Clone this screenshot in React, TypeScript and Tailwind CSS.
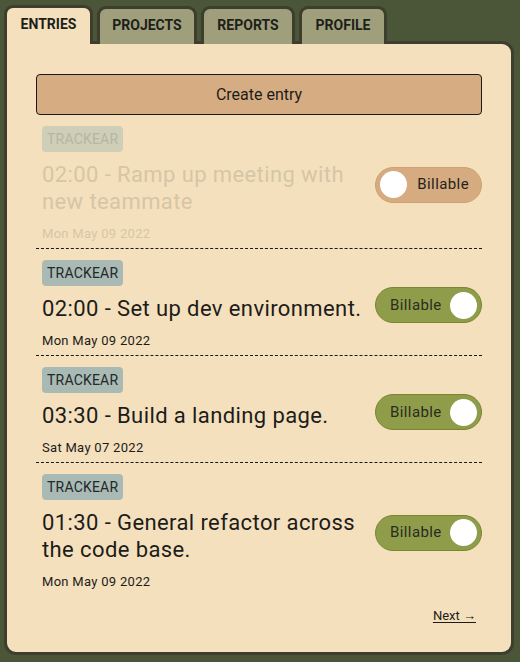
import React from "react";

type Entry = {
  time: string;
  title: string;
  date: string;
  billable: boolean;
  faded?: boolean;
};

const entries: Entry[] = [
  { time: "02:00", title: "Ramp up meeting with new teammate", date: "Mon May 09 2022", billable: false, faded: true },
  { time: "02:00", title: "Set up dev environment.", date: "Mon May 09 2022", billable: true },
  { time: "03:30", title: "Build a landing page.", date: "Sat May 07 2022", billable: true },
  { time: "01:30", title: "General refactor across the code base.", date: "Mon May 09 2022", billable: true },
];

function Toggle({ on }: { on: boolean }) {
  if (on) {
    return (
      <div className="flex h-[36px] w-[107px] shrink-0 items-center justify-between rounded-full border border-[#77872f] bg-[#8f9d4a] pl-[14px] pr-[4px]">
        <span className="text-[15px] tracking-[0.4px] text-[#2b2b22]">Billable</span>
        <span className="h-[27px] w-[27px] rounded-full bg-white" />
      </div>
    );
  }
  return (
    <div className="flex h-[36px] w-[107px] shrink-0 items-center justify-between rounded-full border border-[#cea173] bg-[#d6ab80] pl-[4px] pr-[12px]">
      <span className="h-[27px] w-[27px] rounded-full bg-white" />
      <span className="text-[15px] tracking-[0.4px] text-[#1f241f]">Billable</span>
    </div>
  );
}

function EntryRow({ e, last }: { e: Entry; last: boolean }) {
  return (
    <div
      className={
        last
          ? "flex items-center justify-between pt-[11px] pb-[5px]"
          : "flex items-center justify-between border-b border-dashed border-[#1a1a1a] pt-[11px] pb-[5px]"
      }
    >
      <div className="flex flex-col items-start pl-[6px] pr-[12px]">
        <span
          className={
            e.faded
              ? "flex h-[26px] items-center rounded-[4px] bg-[#cfcfb8] px-[5px] text-[14px] tracking-[0.2px] text-[#b3b7a1]"
              : "flex h-[26px] items-center rounded-[4px] bg-[#a9bab4] px-[5px] text-[14px] tracking-[0.2px] text-[#23282a]"
          }
        >
          TRACKEAR
        </span>
        <div
          className={
            e.faded
              ? "mt-[9px] text-[22px] leading-[27px] tracking-[0.4px] text-[#d5c6a6]"
              : "mt-[9px] text-[22px] leading-[27px] tracking-[0.4px] text-[#1c1c1a]"
          }
        >
          {e.time} - {e.title}
        </div>
        <div
          className={
            e.faded
              ? "mt-[10px] text-[13px] leading-[18px] tracking-[0.3px] text-[#d5c6a6]"
              : "mt-[10px] text-[13px] leading-[18px] tracking-[0.3px] text-[#1c1c1a]"
          }
        >
          {e.date}
        </div>
      </div>
      <Toggle on={e.billable} />
    </div>
  );
}

export default function App() {
  const tabs = [
    { label: "ENTRIES", w: "w-[89px]", active: true },
    { label: "PROJECTS", w: "w-[100px]", active: false },
    { label: "REPORTS", w: "w-[94px]", active: false },
    { label: "PROFILE", w: "w-[88px]", active: false },
  ];
  return (
    <div
      className="min-h-[662px] w-[520px] bg-[#4b5639] px-[4px] pt-[5px] pb-[7px]"
      style={{ fontFamily: "Roboto, 'Noto Sans', sans-serif" }}
    >
      <div className="relative z-10 flex items-end gap-[4px]">
        {tabs.map((t) => (
          <div
            key={t.label}
            className={
              (t.active
                ? "bg-[#f5e0bd] h-[39px] "
                : "bg-[#a09f7c] h-[38px] ") +
              t.w +
              " -mb-[3px] flex items-start justify-center rounded-t-[9px] border-[3px] border-b-0 border-[#3d3e2d] pt-[6px] text-[14px] font-bold text-[#1d1f1a]"
            }
          >
            {t.label}
          </div>
        ))}
      </div>
      <div className="h-[614px] w-[510px] rounded-[12px] rounded-tl-none border-[3px] border-[#3d3e2d] bg-[#f5e0bd] px-[29px] pt-[30px]">
        <button className="flex h-[41px] w-full items-center justify-center rounded-[4px] border border-[#1a1a1a] bg-[#d6ad82] text-[16px] text-[#1c1c1a]">
          Create entry
        </button>
        <div className="flex flex-col">
          {entries.map((e, i) => (
            <EntryRow key={i} e={e} last={i === entries.length - 1} />
          ))}
        </div>
        <div className="mt-[11px] flex justify-end pr-[6px]">
          <a className="text-[13px] leading-[18px] text-[#1c1c1a] underline underline-offset-2">
            Next →
          </a>
        </div>
      </div>
    </div>
  );
}
